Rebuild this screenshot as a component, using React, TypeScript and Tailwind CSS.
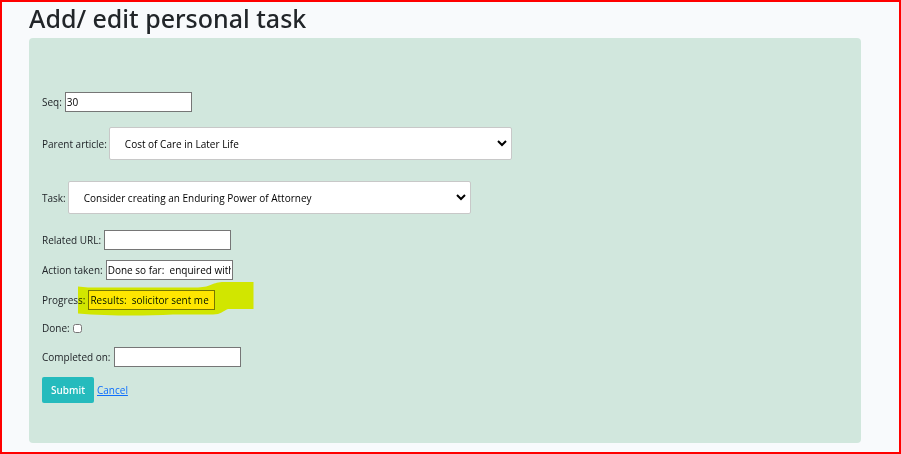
import { useState } from "react";
import type { ReactNode } from "react";

function Row({ id, label, className, children }: { id: string; label: string; className: string; children: ReactNode }) {
  return (
    <div className={`flex items-center ${className}`}>
      <label htmlFor={id} className="shrink-0 whitespace-nowrap">
        {label}
      </label>
      {children}
    </div>
  );
}

const box = "h-5 w-[127px] border border-[#767676] bg-white px-px pb-px text-black outline-none";

function Dropdown({ id, option }: { id: string; option: string }) {
  return (
    <div className="relative ml-0.5 w-[403px]">
      <select
        id={id}
        className="h-[33px] w-full appearance-none rounded-xs border border-[#c8c8c8] bg-white pr-8 pl-[15px] text-black outline-none"
      >
        <option>{option}</option>
      </select>
      <svg
        className="pointer-events-none absolute top-3 right-1 h-2 w-3"
        viewBox="0 0 12 8"
        fill="none"
        stroke="#000"
        strokeWidth="2"
        aria-hidden="true"
      >
        <path d="M2 2 L6 6 L10 2" />
      </svg>
    </div>
  );
}

export default function App() {
  const [done, setDone] = useState(false);
  return (
    <main className="border-2 border-[#ff0000] bg-[#f8fafc] pr-[38px] pb-[9px] pl-[27px] font-['Open_Sans','Noto_Sans',sans-serif] text-[10px] leading-4 text-[#212529]">
      <h1 className="h-9 font-['Noto_Sans','Open_Sans',sans-serif] text-[25px] leading-8 font-medium">Add/ edit personal task</h1>
      <form
        className="rounded-sm bg-[#d1e7dd] px-[13px] pt-[54px] pb-10"
        onSubmit={(event) => event.preventDefault()}
      >
        <Row id="seq" label="Seq:" className="">
          <input id="seq" className={`ml-[3px] ${box}`} defaultValue="30" />
        </Row>
        <Row id="parent" label="Parent article:" className="mt-[15px]">
          <Dropdown id="parent" option="Cost of Care in Later Life" />
        </Row>
        <Row id="task" label="Task:" className="mt-[21px]">
          <Dropdown id="task" option="Consider creating an Enduring Power of Attorney" />
        </Row>
        <Row id="url" label="Related URL:" className="mt-4">
          <input id="url" className={`ml-[3px] ${box}`} />
        </Row>
        <Row id="action" label="Action taken:" className="mt-[10px]">
          <input id="action" className={`ml-[3px] ${box}`} defaultValue="Done so far:  enquired with solicitor" />
        </Row>
        <Row id="progress" label="Progress:" className="relative mt-[10px]">
          <input id="progress" className={`ml-[3px] ${box}`} defaultValue="Results:  solicitor sent me " />
          <svg
            className="pointer-events-none absolute -top-2 left-9 h-[34px] w-[176px] mix-blend-darken"
            viewBox="0 0 176 34"
            fill="#ffe600"
            aria-hidden="true"
          >
            <path d="M0 4.500 L10 5.500 H120 C134 5 134 0 146 0 H175.500 V27 H150 C145 29 143 32.500 135 32.500 H95 C65 34 30 34 0 31.500 Z" />
          </svg>
        </Row>
        <Row id="done" label="Done:" className="mt-[10px]">
          <input
            id="done"
            type="checkbox"
            checked={done}
            onChange={(event) => setDone(event.target.checked)}
            className="ml-[3px] h-[9px] w-[9px]"
          />
        </Row>
        <Row id="completed" label="Completed on:" className="mt-[11px]">
          <input id="completed" className={`ml-[3px] ${box}`} />
        </Row>
        <div className="mt-[10px] flex items-center gap-[3px]">
          <button type="submit" className="h-[26px] w-[52px] rounded-xs bg-[#25bbbd] font-['Noto_Sans','Open_Sans',sans-serif] font-medium text-white">
            Submit
          </button>
          <a href="#cancel" className="text-[#0d6efd] underline">
            Cancel
          </a>
        </div>
      </form>
    </main>
  );
}
